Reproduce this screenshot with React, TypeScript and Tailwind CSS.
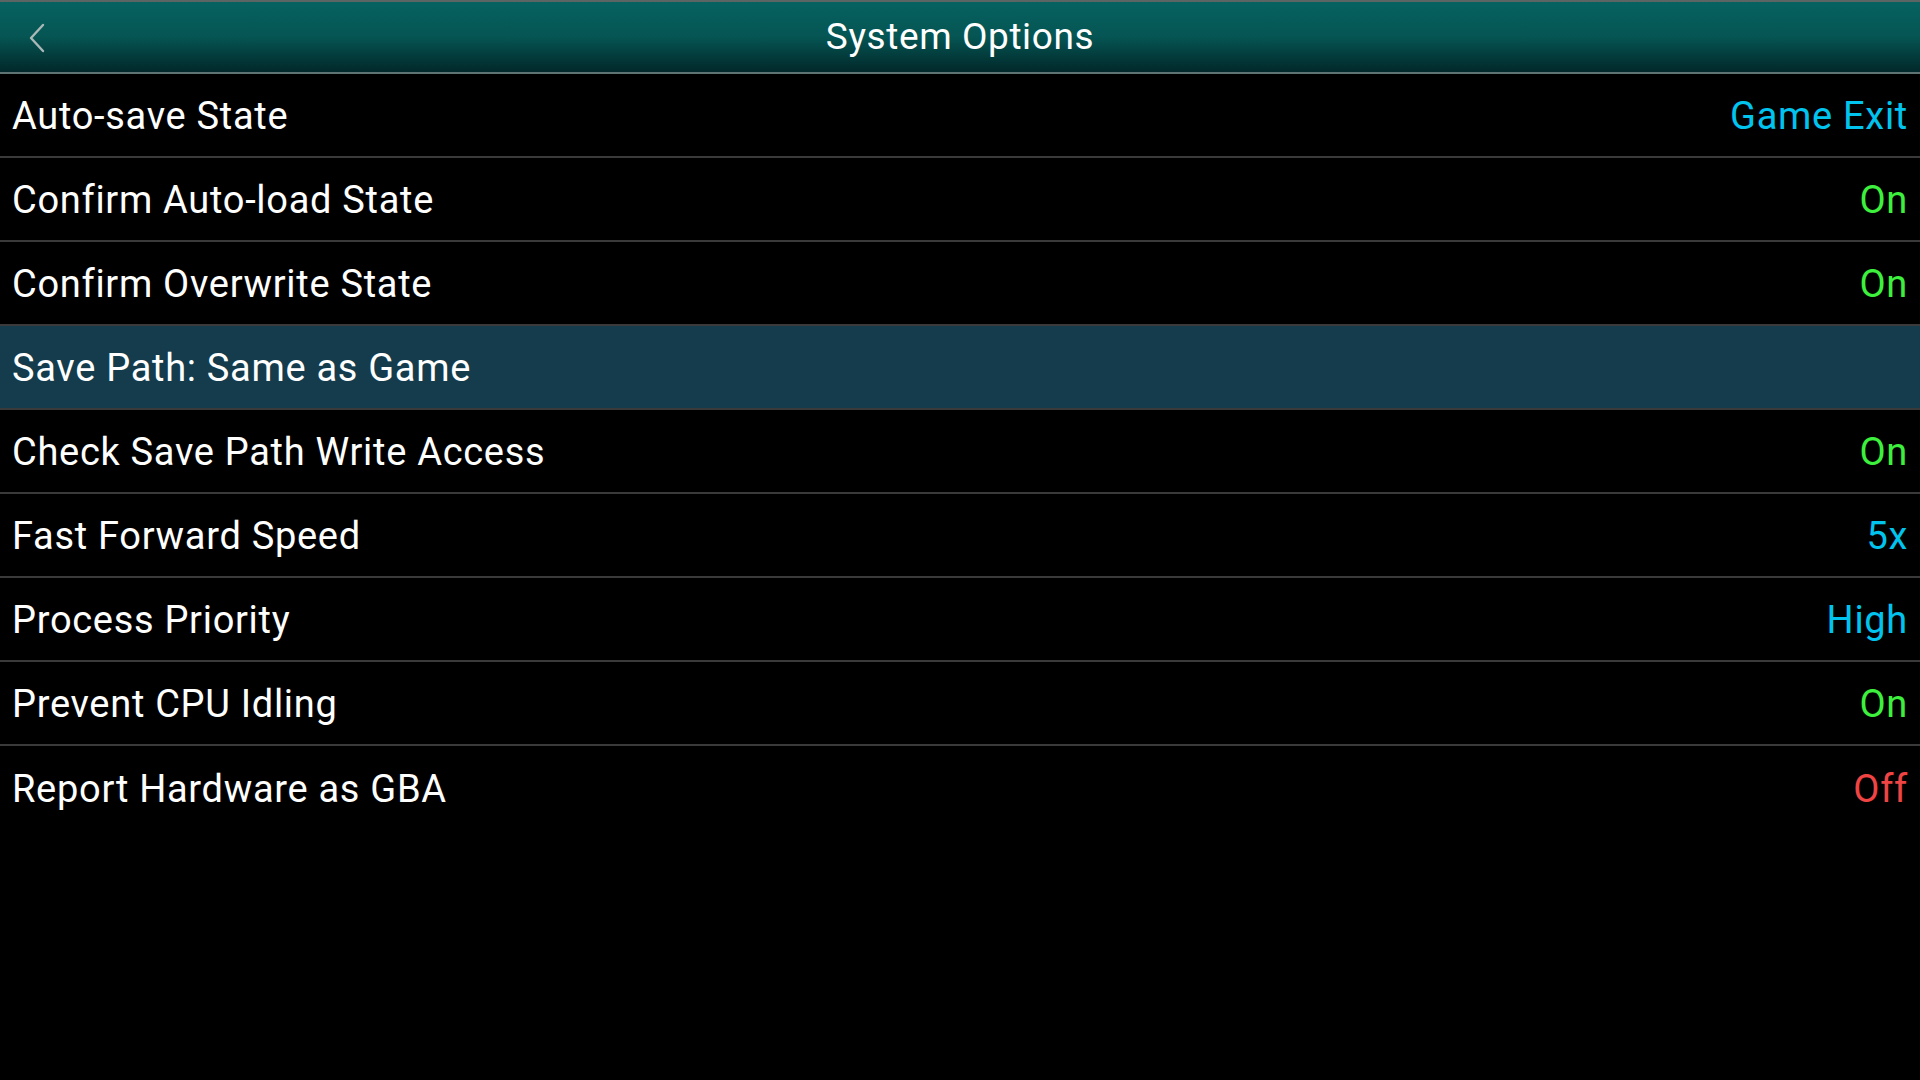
import React from 'react';

type Opt = { label: string; value?: string; tone?: 'cyan' | 'green' | 'red'; active?: boolean };

const options: Opt[] = [
  { label: 'Auto-save State', value: 'Game Exit', tone: 'cyan' },
  { label: 'Confirm Auto-load State', value: 'On', tone: 'green' },
  { label: 'Confirm Overwrite State', value: 'On', tone: 'green' },
  { label: 'Save Path: Same as Game', active: true },
  { label: 'Check Save Path Write Access', value: 'On', tone: 'green' },
  { label: 'Fast Forward Speed', value: '5x', tone: 'cyan' },
  { label: 'Process Priority', value: 'High', tone: 'cyan' },
  { label: 'Prevent CPU Idling', value: 'On', tone: 'green' },
  { label: 'Report Hardware as GBA', value: 'Off', tone: 'red' },
];

const toneClass = {
  cyan: 'text-[#00c4ee]',
  green: 'text-[#3ef03e]',
  red: 'text-[#f04444]',
};

export default function App() {
  return (
    <div className="w-[1920px] h-[1080px] bg-black flex flex-col font-['Roboto',sans-serif] overflow-hidden">
      <header className="h-[74px] shrink-0 border-t-2 border-b-2 border-t-[#5c6464] border-b-[#5e7472] bg-gradient-to-b from-[#066260] via-[#055553] to-[#02282a] flex items-center relative">
        <svg className="absolute left-[28px] top-[20px]" width="18" height="32" viewBox="0 0 18 32" fill="none">
          <path d="M15 3 L3 16 L15 29" stroke="#a9b8b6" strokeWidth="2.4" strokeLinecap="round" strokeLinejoin="round" />
        </svg>
        <h1 className="flex-1 text-center text-white text-[37px] tracking-[0.6px] leading-none pb-[2px]">System Options</h1>
      </header>

      <div className="flex flex-col">
        {options.map((o, i) => (
          <div
            key={o.label}
            className={`h-[84px] flex items-center justify-between pl-[12px] pr-[12px] pt-[2px] ${i < options.length - 1 ? 'border-b-2 border-[#3a3a3a]' : ''} ${o.active ? 'bg-[#143c4c]' : ''}`}
          >
            <span className="text-white text-[38px] tracking-[0.7px] leading-none">{o.label}</span>
            {o.value && (
              <span className={`text-[38px] tracking-[0.7px] leading-none ${toneClass[o.tone!]}`}>{o.value}</span>
            )}
          </div>
        ))}
      </div>
    </div>
  );
}
